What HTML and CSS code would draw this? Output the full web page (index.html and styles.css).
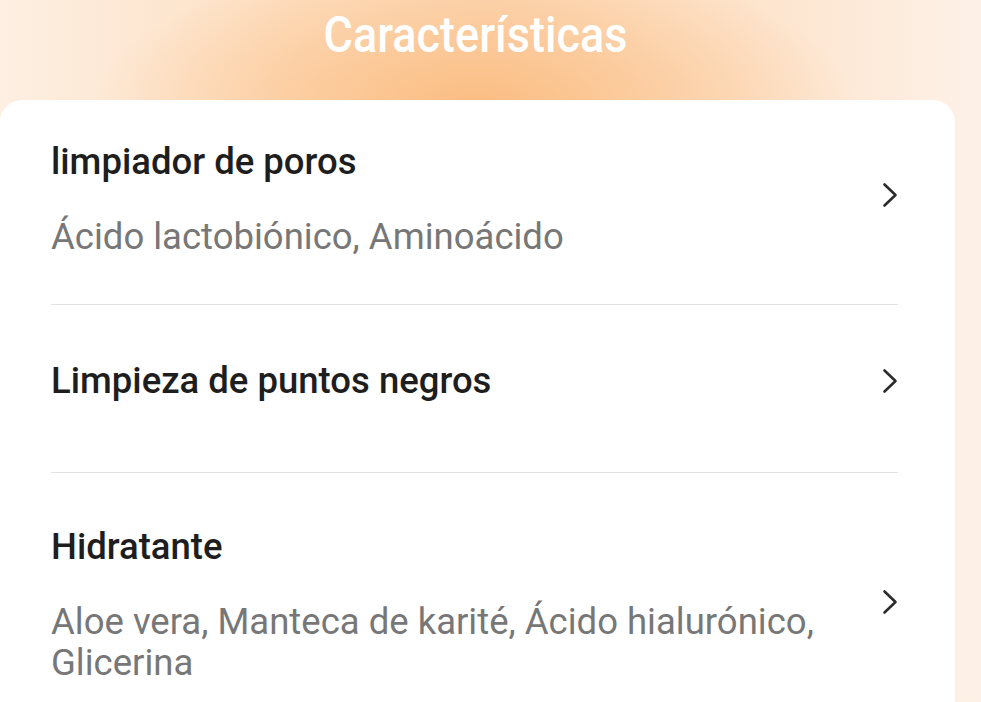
FILE: index.html
```html
<!DOCTYPE html>
<html lang="es">
<head>
<meta charset="utf-8">
<title>Características</title>
<link rel="stylesheet" href="styles.css">
</head>
<body>
<div class="page">
  <header class="header">
    <h1 class="header-title">Características</h1>
  </header>
  <section class="card">
    <div class="row row-first">
      <div class="row-text">
        <div class="row-title">limpiador de poros</div>
        <div class="row-sub">Ácido lactobiónico, Aminoácido</div>
      </div>
      <svg class="chev" viewBox="0 0 16 26" width="16" height="26"><path d="M2.5 2.5 L13.5 13 L2.5 23.5" fill="none" stroke="#2b2b2b" stroke-width="2.6" stroke-linecap="round" stroke-linejoin="round"/></svg>
    </div>
    <div class="row row-second">
      <div class="row-text">
        <div class="row-title">Limpieza de puntos negros</div>
      </div>
      <svg class="chev" viewBox="0 0 16 26" width="16" height="26"><path d="M2.5 2.5 L13.5 13 L2.5 23.5" fill="none" stroke="#2b2b2b" stroke-width="2.6" stroke-linecap="round" stroke-linejoin="round"/></svg>
    </div>
    <div class="row row-third">
      <div class="row-text">
        <div class="row-title">Hidratante</div>
        <div class="row-sub">Aloe vera, Manteca de karité, Ácido hialurónico, Glicerina</div>
      </div>
      <svg class="chev" viewBox="0 0 16 26" width="16" height="26"><path d="M2.5 2.5 L13.5 13 L2.5 23.5" fill="none" stroke="#2b2b2b" stroke-width="2.6" stroke-linecap="round" stroke-linejoin="round"/></svg>
    </div>
  </section>
</div>
</body>
</html>
```
FILE: styles.css
```css
html, body {
  margin: 0;
  padding: 0;
}
body {
  width: 981px;
  height: 702px;
  overflow: hidden;
  font-family: Roboto, "Noto Sans", sans-serif;
  background:
    radial-gradient(ellipse 380px 150px at 475px 105px, rgba(251, 188, 128, 0.95), rgba(251, 200, 150, 0) 100%),
    linear-gradient(90deg, #fdefe2 0%, #fddfc2 30%, #fcd8b6 50%, #fde3cb 75%, #fdf1e7 100%);
}
.page {
  display: flex;
  flex-direction: column;
}
.header {
  height: 100px;
  display: flex;
  justify-content: center;
  padding-right: 30px;
  box-sizing: border-box;
}
.header-title {
  margin: 0;
  margin-top: 11px;
  font-size: 45px;
  line-height: 52px;
  font-weight: 500;
  color: #ffffff;
  transform: scaleY(1.12);
}
.card {
  width: 955px;
  background: #ffffff;
  border-radius: 22px 22px 0 0;
  min-height: 602px;
}
.row {
  display: flex;
  align-items: center;
  margin: 0 57px 0 51px;
  border-bottom: 1px solid #e2e2e2;
}
.row-first {
  padding: 41px 0 47px;
}
.row-second {
  padding: 55px 0 71px;
}
.row-third {
  padding: 53px 0 0;
  border-bottom: none;
}
.row-text {
  flex: 1;
  display: flex;
  flex-direction: column;
  gap: 34px;
}
.row-title {
  font-size: 36.5px;
  line-height: 41px;
  font-weight: 500;
  color: #1e1e1e;
}
.row-sub {
  font-size: 36.5px;
  line-height: 41px;
  font-weight: 400;
  color: #777777;
  padding-right: 20px;
}
.chev {
  flex: none;
  margin-left: 10px;
}
.row-first .chev { margin-top: -8px; }
.row-third .chev { margin-top: -6px; }
```
